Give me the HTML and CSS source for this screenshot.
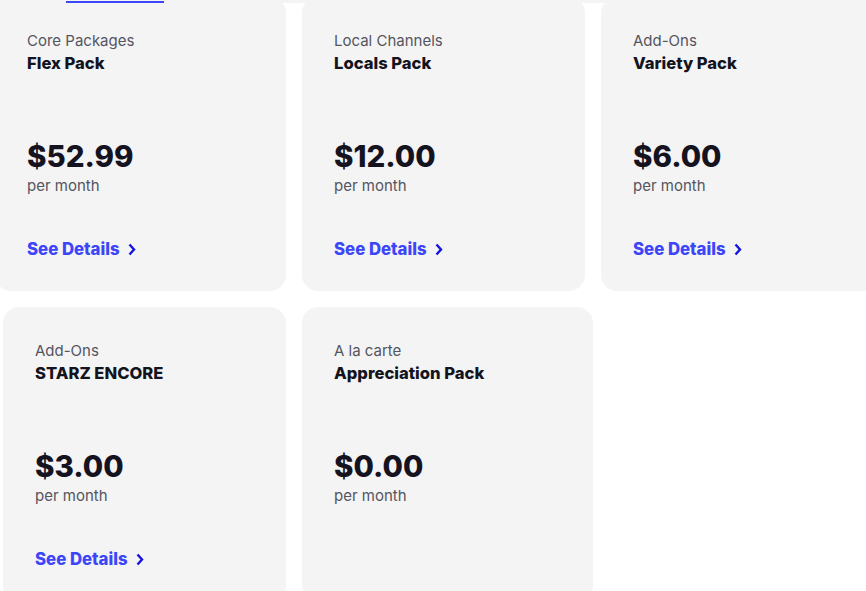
FILE: index.html
```html
<!DOCTYPE html>
<html lang="en">
<head>
    <meta charset="UTF-8">
    <meta name="viewport" content="width=device-width, initial-scale=1.0">
    <title>Packages</title>
    <link rel="stylesheet" href="styles.css">
</head>
<body>
    <div class="tabs">
        <span class="tab-indicator"></span>
    </div>

    <div class="packages">
        <div class="row row-first">
            <div class="card card-wide">
                <div class="category">Core Packages</div>
                <div class="name">Flex Pack</div>
                <div class="price">$52.99</div>
                <div class="period">per month</div>
                <a class="details" href="#">See Details
                    <svg width="8" height="13" viewBox="0 0 8 13"><path d="M1.5 1.5 L6 6.5 L1.5 11.5" fill="none" stroke="currentColor" stroke-width="2.4"/></svg>
                </a>
            </div>
            <div class="card">
                <div class="category">Local Channels</div>
                <div class="name">Locals Pack</div>
                <div class="price">$12.00</div>
                <div class="period">per month</div>
                <a class="details" href="#">See Details
                    <svg width="8" height="13" viewBox="0 0 8 13"><path d="M1.5 1.5 L6 6.5 L1.5 11.5" fill="none" stroke="currentColor" stroke-width="2.4"/></svg>
                </a>
            </div>
            <div class="card">
                <div class="category">Add-Ons</div>
                <div class="name">Variety Pack</div>
                <div class="price">$6.00</div>
                <div class="period">per month</div>
                <a class="details" href="#">See Details
                    <svg width="8" height="13" viewBox="0 0 8 13"><path d="M1.5 1.5 L6 6.5 L1.5 11.5" fill="none" stroke="currentColor" stroke-width="2.4"/></svg>
                </a>
            </div>
        </div>

        <div class="row row-second">
            <div class="card card-narrow">
                <div class="category">Add-Ons</div>
                <div class="name">STARZ ENCORE</div>
                <div class="price">$3.00</div>
                <div class="period">per month</div>
                <a class="details" href="#">See Details
                    <svg width="8" height="13" viewBox="0 0 8 13"><path d="M1.5 1.5 L6 6.5 L1.5 11.5" fill="none" stroke="currentColor" stroke-width="2.4"/></svg>
                </a>
            </div>
            <div class="card card-wide">
                <div class="category">A la carte</div>
                <div class="name">Appreciation Pack</div>
                <div class="price">$0.00</div>
                <div class="period">per month</div>
            </div>
        </div>
    </div>
</body>
</html>
```

FILE: styles.css
```css
body {
    margin: 0;
    background-color: #fff;
    font-family: Inter, "Noto Sans", sans-serif;
    overflow: hidden;
}
.tabs {
    position: relative;
    z-index: 1;
    height: 3px;
    background-color: #f4f4f4;
}
.tab-indicator {
    position: absolute;
    left: 66px;
    top: 1px;
    width: 98px;
    height: 2px;
    background-color: #3c46f8;
}
.packages {
    margin-top: -6px;
}
.row {
    display: flex;
    gap: 16px;
    margin-bottom: 16px;
}
.row-first {
    margin-left: -5px;
}
.row-second {
    margin-left: 3px;
}
.card {
    flex: 0 0 283px;
    box-sizing: border-box;
    height: 294px;
    padding: 34px 32px 0;
    background-color: #f4f4f4;
    border-radius: 16px;
}
.card-wide {
    flex-basis: 291px;
}
.card-narrow {
    flex-basis: 283px;
}
.category {
    font-size: 15px;
    line-height: 20px;
    color: #55555f;
}
.name {
    margin-top: 2px;
    font-size: 16.6px;
    line-height: 20px;
    font-weight: 800;
    color: #14141f;
}
.price {
    margin-top: 65px;
    font-size: 29.5px;
    line-height: 36px;
    font-weight: 800;
    color: #15131f;
}
.period {
    margin-top: 2px;
    font-size: 15px;
    line-height: 20px;
    color: #55555f;
}
.details {
    display: flex;
    align-items: center;
    gap: 8px;
    margin-top: 43px;
    font-size: 16.8px;
    line-height: 20px;
    font-weight: 800;
    color: #3c46f8;
    text-decoration: none;
}
.details svg {
    color: #1414e0;
}
```
